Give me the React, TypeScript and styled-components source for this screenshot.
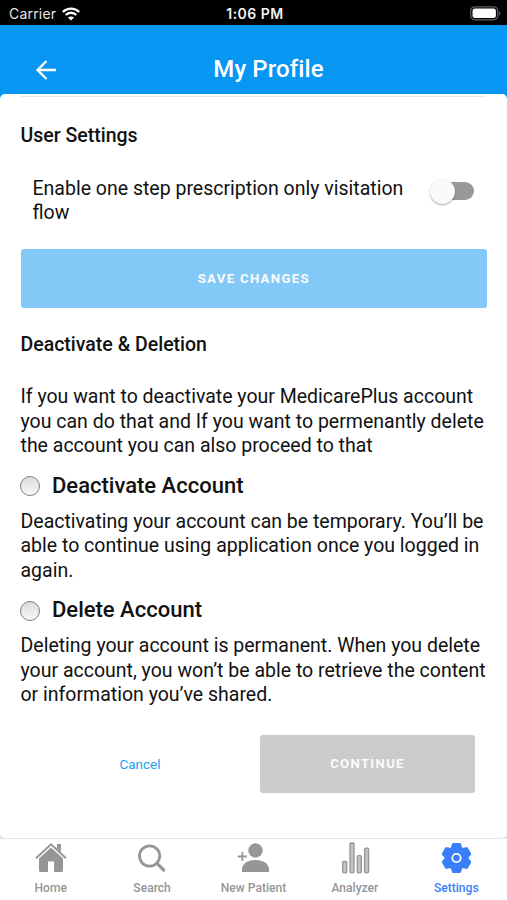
import React from "react";
import styled, { createGlobalStyle } from "styled-components";

const Global = createGlobalStyle`
  *, *::before, *::after { box-sizing: border-box; }
  body { margin: 0; background: #fff; font-family: Roboto, sans-serif; color: #111; }
  h1, h2, p { margin: 0; }
  button { font-family: inherit; border: 0; padding: 0; }
`;

const Screen = styled.div`
  width: 507px;
  height: 900px;
  display: flex;
  flex-direction: column;
  overflow: hidden;
  background: linear-gradient(#0896f3 50%, #e0e0e0 50%);
`;

const StatusBar = styled.div`
  flex: none;
  height: 25px;
  padding: 2px 6px 0 9px;
  display: grid;
  grid-template-columns: 1fr auto 1fr;
  align-items: center;
  background: #000;
  color: #e4e4e4;
  font: 400 14px/20px Inter, sans-serif;
`;

const Carrier = styled.div`
  display: flex;
  align-items: center;
  gap: 6px;
  letter-spacing: 0.2px;
`;

const Clock = styled.div`
  color: #f2f2f2;
  font-weight: 600;
  font-size: 14px;
  letter-spacing: 0.5px;
`;

const Battery = styled.svg`
  justify-self: end;
`;

const Header = styled.header`
  flex: none;
  height: 69px;
  padding: 18px 4px 0 34px;
  display: grid;
  grid-template-columns: 24px 1fr 24px;
  align-items: center;
  color: #fff;
`;

const BackButton = styled.button`
  display: flex;
  background: none;
  color: #fff;
  padding-top: 3px;
`;

const Title = styled.h1`
  text-align: center;
  font-size: 24px;
  line-height: 28px;
  font-weight: 500;
  letter-spacing: 0.1px;
`;

const Content = styled.main`
  flex: 1;
  min-height: 0;
  padding: 0 20px;
  background: #fff;
  border-radius: 5px;
  display: flex;
  flex-direction: column;
`;

const CardEdge = styled.div`
  height: 3px;
  flex: none;
  border-bottom: 1px solid #e4e6ec;
  border-radius: 0 0 5px 5px;
`;

const SectionTitle = styled.h2<{ $top: number }>`
  margin-top: ${(p) => p.$top}px;
  font-size: 19.5px;
  line-height: 24px;
  font-weight: 500;
  padding-left: 0.5px;
`;

const Paragraph = styled.p<{ $top?: number }>`
  margin-top: ${(p) => p.$top ?? 0}px;
  padding-left: 0.5px;
  font-size: 19.5px;
  line-height: 24.4px;
  white-space: pre;
`;

const SettingRow = styled.div`
  margin-top: 29px;
  padding: 0 13px 0 12px;
  display: flex;
  justify-content: space-between;
  align-items: flex-start;
`;

const Toggle = styled.button`
  width: 45px;
  height: 26px;
  margin-top: 1px;
  display: flex;
  align-items: center;
  justify-content: flex-end;
  background: none;
`;

const Track = styled.span`
  width: 36px;
  height: 18px;
  border-radius: 9px;
  background: #999;
  display: flex;
  align-items: center;
`;

const Thumb = styled.span`
  flex: none;
  width: 25px;
  height: 25px;
  margin-left: -8px;
  border-radius: 50%;
  background: #fafafa;
  box-shadow: 0 1px 2px rgba(0, 0, 0, 0.35);
`;

const ActionButton = styled.button<{ $color: string; $width: number }>`
  width: ${(p) => p.$width}px;
  height: 58.5px;
  border-radius: 3px;
  background: ${(p) => p.$color};
  color: #fbfbfb;
  font-size: 13.2px;
  font-weight: 700;
  letter-spacing: 1.3px;
`;

const SaveSlot = styled.div`
  margin-top: 23.5px;
  padding-left: 0.5px;
  display: flex;
`;

const Option = styled.label<{ $top: number }>`
  margin-top: ${(p) => p.$top}px;
  display: flex;
  align-items: center;
  gap: 12px;
  font-size: 22px;
  line-height: 28px;
  font-weight: 500;
`;

const Radio = styled.input.attrs({ type: "radio" })`
  appearance: none;
  flex: none;
  width: 20px;
  height: 20px;
  margin: 1px 0 0;
  border: 1.5px solid #808080;
  border-radius: 50%;
  background: linear-gradient(#dcdcdc, #f8f8f8);
`;

const Actions = styled.div`
  margin-top: 27px;
  padding-right: 12px;
  display: flex;
  align-items: center;
`;

const CancelButton = styled.button`
  flex: 1;
  background: none;
  color: #18a0f5;
  font-size: 13.5px;
  line-height: 20px;
`;

const NavFrame = styled.div`
  flex: none;
  background: #e7e7e7;
  padding-top: 1px;
  height: 62px;
`;

const Nav = styled.nav`
  height: 61px;
  background: #fff;
  display: grid;
  grid-template-columns: repeat(5, 1fr);
`;

const Tab = styled.button<{ $active?: boolean }>`
  display: flex;
  flex-direction: column;
  align-items: center;
  padding-top: 2px;
  gap: 5px;
  background: none;
  color: ${(p) => (p.$active ? "#397efa" : "#969696")};
  font-size: 12.1px;
  line-height: 16px;
  font-weight: 500;
  white-space: nowrap;
`;

const HomeIcon = () => (
  <svg width="34" height="34" viewBox="0 0 34 34" fill="none" stroke="currentColor">
    <path d="M2 17.3 17 3.3l15 14" strokeWidth="2" />
    <path d="M23 3h4v8.3l-4-3.700z" fill="currentColor" stroke="none" />
    <path d="M5 17.500 17 6.600l12 10.900V29.500a1.500 1.500 0 0 1-1.500 1.500H20v-10.500h-6v10.500H6.500A1.500 1.500 0 0 1 5 29.500z" fill="currentColor" stroke="none" />
  </svg>
);

const SearchIcon = () => (
  <svg width="34" height="34" viewBox="0 0 34 34" fill="none" stroke="currentColor" strokeWidth="2.8">
    <circle cx="14.6" cy="15" r="10.1" />
    <path d="m21.8 22.200 6.800 6.800" strokeWidth="3.200" strokeLinecap="round" />
  </svg>
);

const PatientIcon = () => (
  <svg width="34" height="34" viewBox="0 0 34 34" fill="currentColor">
    <circle cx="19.500" cy="9.500" r="7.200" />
    <path d="M6 31v-2.300c0-6.200 5.500-9.800 13.500-9.800S33 22.500 33 28.700V31z" />
    <path d="M6.300 11v9M1.800 15.500h9" fill="none" stroke="currentColor" strokeWidth="1.800" />
  </svg>
);

const BarsIcon = () => (
  <svg width="34" height="34" viewBox="0 0 34 34" fill="#c4c4c4" stroke="currentColor" strokeWidth="1.300">
    <rect x="4.700" y="20.500" width="4" height="11.300" rx="1.200" />
    <rect x="12" y="2" width="4" height="29.800" rx="1.200" />
    <rect x="19.300" y="14.700" width="4" height="17.100" rx="1.200" />
    <rect x="26.600" y="7.200" width="4" height="24.600" rx="1.200" />
  </svg>
);

const GearIcon = () => (
  <svg width="34" height="34" viewBox="0 0 34 34">
    <g fill="currentColor" transform="translate(17.500 17)">
      <circle r="11.600" />
      {[0, 60, 120, 180, 240, 300].map((angle) => (
        <path
          key={angle}
          transform={`rotate(${angle})`}
          d="M-6-9.500-4.500-13.900Q-4.200-14.900-3.200-14.900H3.200Q4.200-14.900 4.500-13.900L6-9.500z"
        />
      ))}
    </g>
    <circle cx="17.500" cy="17" r="4.200" fill="none" stroke="#fff" strokeWidth="1.800" />
  </svg>
);

const tabs = [
  { label: "Home", Icon: HomeIcon },
  { label: "Search", Icon: SearchIcon },
  { label: "New Patient", Icon: PatientIcon },
  { label: "Analyzer", Icon: BarsIcon },
  { label: "Settings", Icon: GearIcon, active: true },
];

export default function App() {
  return (
    <Screen>
      <Global />
      <StatusBar>
        <Carrier>
          Carrier
          <svg width="18" height="14" viewBox="0 0 18 14" fill="none" stroke="#fff" strokeWidth="2.300">
            <path d="M.8 5C5.500.5 12.500.5 17.200 5M3.700 8c3-3 7.600-3 10.600 0" />
            <path d="M9 13.500 6 10.500c1.700-1.500 4.300-1.500 6 0z" fill="#fff" stroke="none" />
          </svg>
        </Carrier>
        <Clock>1:06 PM</Clock>
        <Battery width="31" height="15" viewBox="0 0 31 15">
          <rect x=".7" y=".8" width="27" height="13" rx="4" fill="none" stroke="#626262" strokeWidth="1.200" />
          <rect x="2.500" y="2.600" width="23.400" height="9.400" rx="2.500" fill="#fff" />
          <path d="M28.900 5q3 2.400 0 4.800z" fill="#626262" />
        </Battery>
      </StatusBar>
      <Header>
        <BackButton aria-label="Back">
          <svg width="24" height="24" viewBox="0 0 24 24" fill="none" stroke="currentColor" strokeWidth="2.300">
            <path d="M22 12H4M12.500 3 3.500 12l9 9" />
          </svg>
        </BackButton>
        <Title>My Profile</Title>
      </Header>
      <Content>
        <CardEdge />
        <SectionTitle $top={27}>User Settings</SectionTitle>
        <SettingRow>
          <Paragraph>{"Enable one step prescription only visitation\nflow"}</Paragraph>
          <Toggle role="switch" aria-checked="false">
            <Track>
              <Thumb />
            </Track>
          </Toggle>
        </SettingRow>
        <SaveSlot>
          <ActionButton $color="#83c9f8" $width={467}>SAVE CHANGES</ActionButton>
        </SaveSlot>
        <SectionTitle $top={25}>Deactivate &amp; Deletion</SectionTitle>
        <Paragraph $top={28.5}>
          {"If you want to deactivate your MedicarePlus account\nyou can do that and If you want to permenantly delete\nthe account you can also proceed to that"}
        </Paragraph>
        <Option $top={13}>
          <Radio name="account-action" />
          Deactivate Account
        </Option>
        <Paragraph $top={10.3}>
          {"Deactivating your account can be temporary. You’ll be\nable to continue using application once you logged in\nagain."}
        </Paragraph>
        <Option $top={13}>
          <Radio name="account-action" />
          Delete Account
        </Option>
        <Paragraph $top={10.3}>
          {"Deleting your account is permanent. When you delete\nyour account, you won’t be able to retrieve the content\nor information you’ve shared."}
        </Paragraph>
        <Actions>
          <CancelButton>Cancel</CancelButton>
          <ActionButton $color="#cbcbcb" $width={215}>CONTINUE</ActionButton>
        </Actions>
      </Content>
      <NavFrame>
        <Nav>
          {tabs.map(({ label, Icon, active }) => (
            <Tab key={label} $active={active}>
              <Icon />
              {label}
            </Tab>
          ))}
        </Nav>
      </NavFrame>
    </Screen>
  );
}
